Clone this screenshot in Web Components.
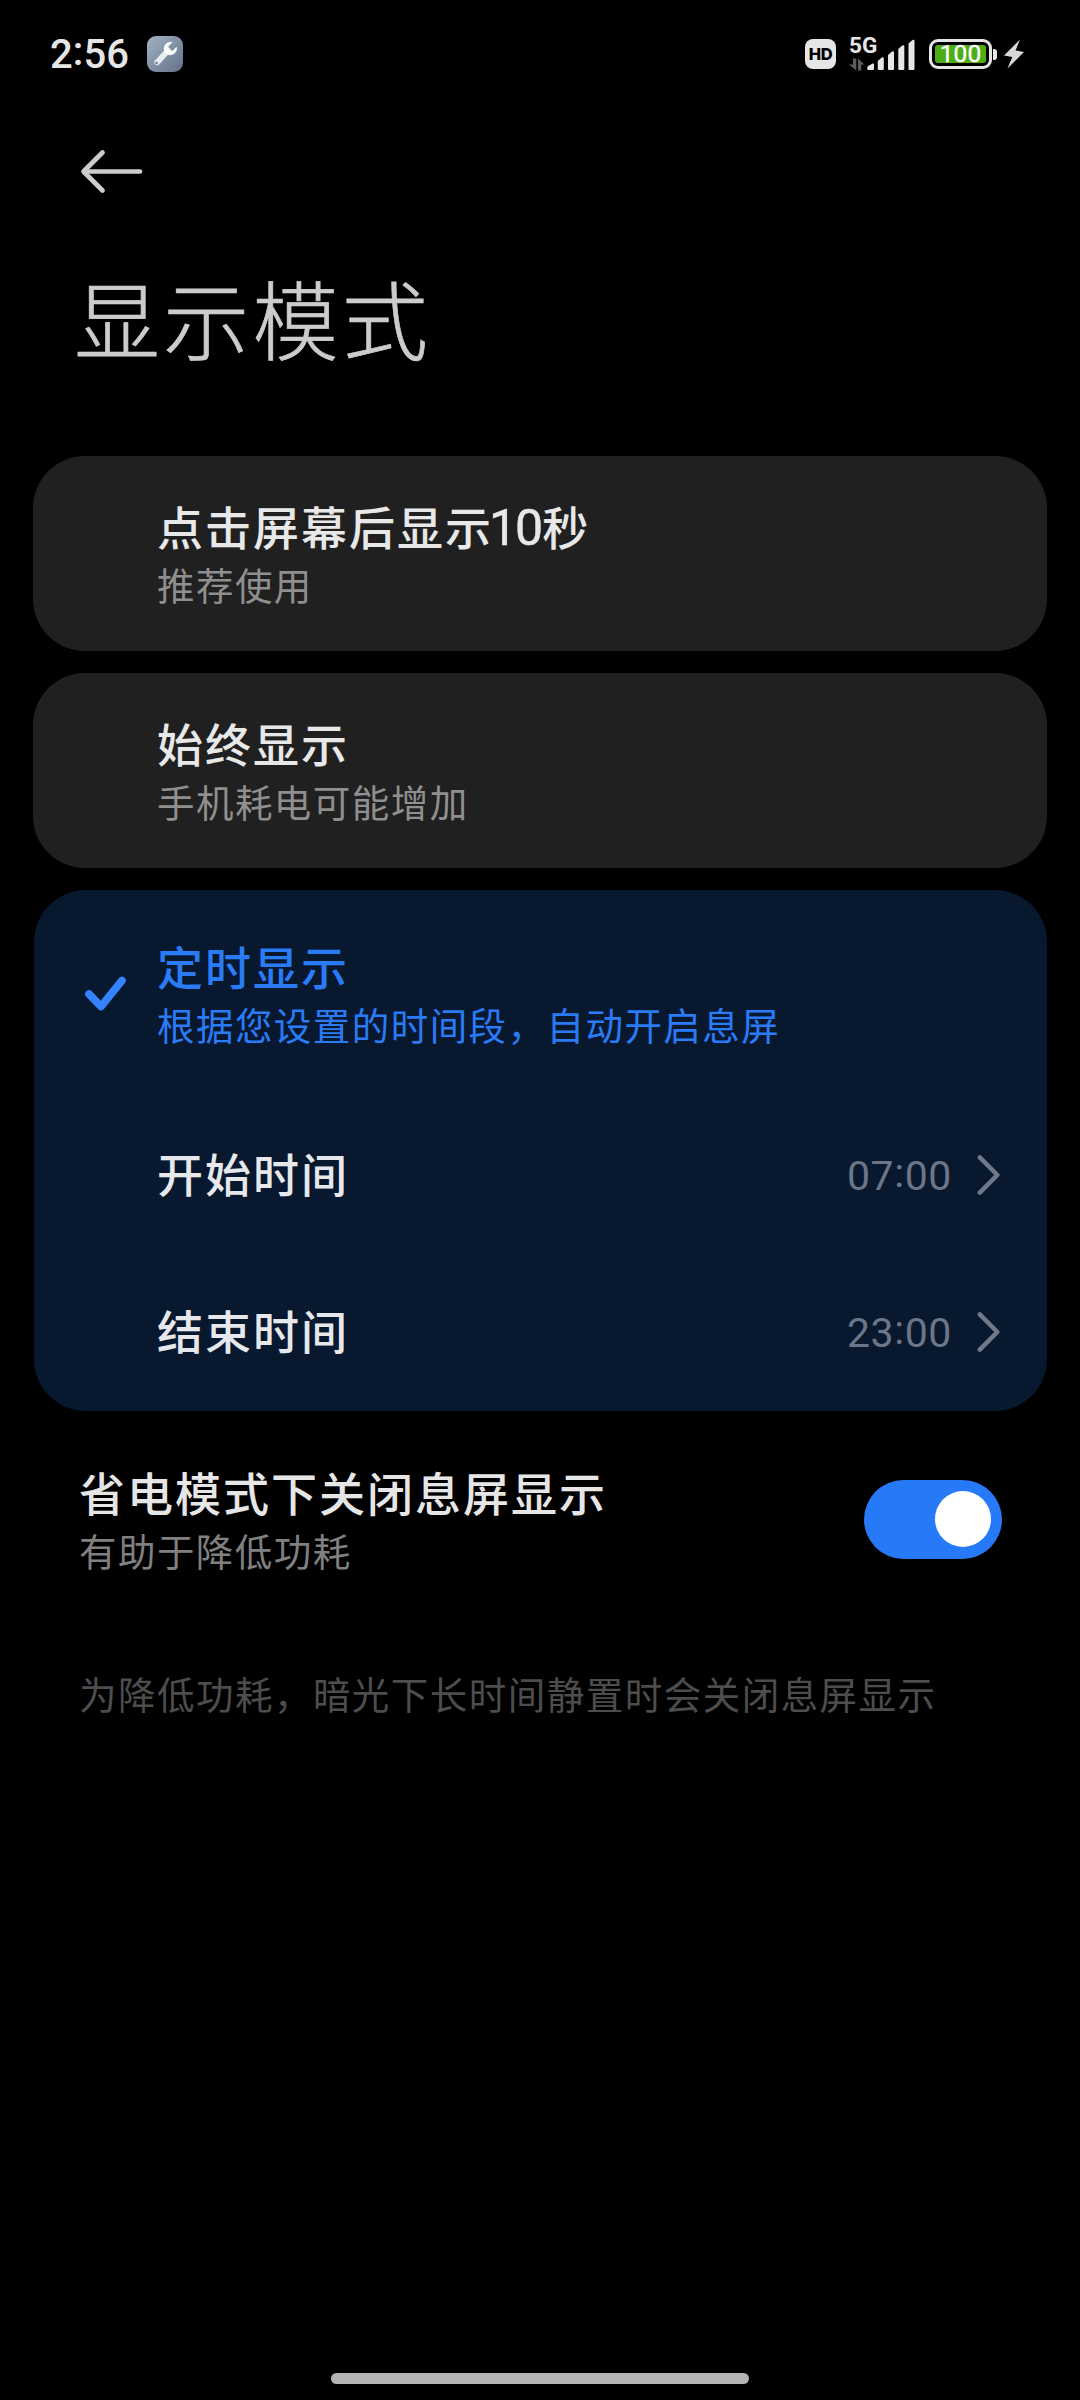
<!DOCTYPE html>
<html lang="zh-CN">
<head>
<meta charset="utf-8">
<title>显示模式</title>
<style>
html,body{margin:0;background:#000}
body{width:1080px;height:2400px;overflow:hidden;font-family:"Noto Sans CJK SC",sans-serif;color:#e6e6e6}
</style>
</head>
<body>
<display-mode-page></display-mode-page>
<script>
function define(name, html) {
  const t = document.createElement('template');
  t.innerHTML = html;
  customElements.define(name, class extends HTMLElement {
    constructor() {
      super();
      this.attachShadow({ mode: 'open' }).append(t.content.cloneNode(true));
    }
  });
}

define('status-bar', `
<style>
:host{display:flex;justify-content:space-between;height:108px;padding:0 56px 0 50px;box-sizing:border-box}
.left,.right{display:flex;align-items:center}
.time{font-family:Roboto,sans-serif;font-size:40px;font-weight:500;line-height:56px;width:97px;letter-spacing:.1px;padding-top:2px;color:#e6e6e6;white-space:nowrap}
.time i{font-style:normal;position:relative;top:-3px}
.left svg{display:block}
.hd{width:31px;height:30px;border-radius:8px;background:#e6e6e6;color:#000;font:800 16.5px/30px Inter,sans-serif;text-align:center;letter-spacing:-.3px;margin-right:13px}
.net{display:grid;width:67px;height:36px;margin-right:13px}
.net>*{grid-area:1/1}
.net span{font:700 22.500px/18px Roboto,sans-serif;color:#e6e6e6}
.bat{display:flex;align-items:center;margin-right:7px}
.shell{box-sizing:border-box;width:63px;height:30px;border:3.4px solid #e6e6e6;border-radius:9px;padding:3px;display:flex}
.fill{flex:1;background:#4cae16;border-radius:3px;color:#fff;font:400 24.500px/18px Roboto,sans-serif;-webkit-text-stroke:.3px #fff;display:flex;justify-content:center;align-items:center}
.nub{width:4px;height:11px;margin-left:1px;border-radius:0 3px 3px 0;background:#e6e6e6}
</style>
<div class="left"><span class="time">2<i>:</i>56</span>
<svg width="36" height="36" viewBox="0 0 36 36"><defs><linearGradient id="g" x1="0" y1="0" x2="1" y2="1"><stop offset="0" stop-color="#a3b3c5"/><stop offset="1" stop-color="#627186"/></linearGradient></defs>
<rect width="36" height="36" rx="9" fill="url(#g)"/>
<path d="M10 26.500 21 14.500" stroke="#e9edf1" stroke-width="5.600" stroke-linecap="round"/>
<path d="M25.500 6.300A6.600 6.600 0 1 0 29.700 10.800L25.500 14.800 21.600 13.600 21.400 10.200Z" fill="#fff"/>
<circle cx="9.500" cy="27" r="1.500" fill="#7e8da0"/></svg></div>
<div class="right"><div class="hd">HD</div>
<div class="net"><span>5G</span><svg width="67" height="36" viewBox="0 0 67 36">
<g fill="#e6e6e6"><path d="M18.300 33v-1.500q0-1.200 1-1.500l4.300-2.500q1.400-.5 1.400 1V33q0 1-1 1h-4.700q-1 0-1-1z"/><path d="M28.800 33v-8l4-3.500q2-1 2 1V33q0 1-1 1h-4q-1 0-1-1z"/><path d="M39 33V19l4-3.500q2-1 2 1V33q0 1-1 1h-4q-1 0-1-1z"/><path d="M49.300 33V13l4-3.500q2-1 2 1V33q0 1-1 1h-4q-1 0-1-1z"/><path d="M59.500 33V7.500L63.500 4q2-1 2 1V33q0 1-1 1h-4q-1 0-1-1z"/></g>
<path d="M4 22.500h3.300V34.500L0 28.500h4zM9 34.500V22.500l6.300 6h-3v6z" fill="#5c5c5c"/></svg></div>
<div class="bat"><div class="shell"><div class="fill">100</div></div><div class="nub"></div></div>
<svg width="20" height="30" viewBox="0 0 20 30"><path d="M16 .5 0 16.500 8.300 18 3.500 29.500 20 13 11.500 11.500Z" fill="#d8d8d8"/></svg></div>
`);

define('page-header', `
<style>
:host{display:flex;flex-direction:column;padding:39px 78px 0;height:348px;box-sizing:border-box}
svg{display:block;margin-left:2px}
h1{margin:57px 0 0;font-size:86px;line-height:126px;font-weight:300;letter-spacing:3.300px;margin-left:-4px;color:#ccc;-webkit-text-stroke:.7px #ccc}
</style>
<svg width="64" height="50" viewBox="0 0 64 50" fill="none" stroke="#ccc" stroke-width="4.700" stroke-linecap="round"><path d="M60 24.500H5"/><path d="M22.500 5.500 3.500 24.500 22.500 43.500" stroke-linejoin="round"/></svg>
<h1><slot></slot></h1>
`);

define('text-pair', `
<style>
:host{display:flex;flex-direction:column;white-space:nowrap;color:var(--title,#e8e8e8)}
.t{font-size:46px;line-height:64px;height:63px;padding-top:1px;font-weight:500;letter-spacing:2px}
.s{font-size:37.500px;line-height:55px;letter-spacing:1.450px;color:var(--sub,#8f8f8f)}
::slotted(b){font:400 50px/50px Roboto,sans-serif!important;letter-spacing:-2px!important;margin:0 1px 0 -4px;-webkit-text-stroke:.5px}
</style>
<div class="t"><slot></slot></div><div class="s"><slot name="sub"></slot></div>
`);

define('option-card', `
<style>
:host{display:block;box-sizing:border-box;height:195px;margin:0 33px 22px;padding:36px 0 0 124px;border-radius:52px;background:#202020}
</style><slot></slot>
`);

define('schedule-card', `
<style>
:host{display:block;height:521px;margin:0 33px 0 34px;border-radius:52px;background:#07182f}
.head{display:flex;height:207px;box-sizing:border-box;padding:42px 0 0 50px;align-items:flex-start;--title:#2a7bf6;--sub:#2a7bf6}
svg{display:block;margin:43px 31px 0 0}
</style>
<div class="head"><svg width="42" height="38" viewBox="0 0 42 38" fill="none" stroke="#3482ff" stroke-width="7.600" stroke-linecap="round" stroke-linejoin="round"><path d="M5 19 17 31.500 38 5.500"/></svg><slot name="head"></slot></div>
<slot></slot>
`);

define('time-row', `
<style>
:host{display:flex;align-items:center;height:157px;padding:0 47px 0 123px}
.l{flex:1;font-size:46px;line-height:64px;margin-top:-7px;font-weight:500;letter-spacing:2px;color:#e6e8eb}
.v{font-family:Roboto,sans-serif;font-size:41px;line-height:60px;color:#6c7686;letter-spacing:.6px}
svg{display:block;margin:-1px 0 0 25px}
</style>
<div class="l"><slot></slot></div><div class="v"><slot name="value"></slot></div>
<svg width="23" height="42" viewBox="0 0 23 42" fill="none" stroke="#6f7989" stroke-width="4.500" stroke-linecap="round" stroke-linejoin="round"><path d="M2.800 3.300 20.300 21 2.800 38.700"/></svg>
`);

define('toggle-switch', `
<style>
:host{display:flex;justify-content:flex-end;align-items:center;box-sizing:border-box;width:138px;height:79px;padding:0 11px 1px 0;border-radius:40px;background:#277af7}
i{width:56px;height:56px;border-radius:50%;background:#fff}
</style><i></i>
`);

define('setting-row', `
<style>
:host{display:flex;justify-content:space-between;align-items:flex-start;margin:47px 78px 0 79px;--sub:#808080;--title:#e6e6e6}
toggle-switch{margin-top:22px}
</style><slot></slot><toggle-switch></toggle-switch>
`);

define('foot-note', `
<style>
:host{display:block;margin:88px 0 0 79px;font-size:37.500px;line-height:55px;letter-spacing:1.480px;color:#4d4d4d;white-space:nowrap}
</style><slot></slot>
`);

define('home-indicator', `
<style>
:host{display:block;width:418px;height:11px;border-radius:6px;background:#b3b3b3;margin:auto auto 16px}
</style>
`);

define('display-mode-page', `
<style>
:host{display:flex;flex-direction:column;width:1080px;height:2400px;background:#000}
i{font-style:normal;position:relative;top:-3px}
</style>
<status-bar></status-bar>
<page-header>显示模式</page-header>
<option-card><text-pair>点击屏幕后显示<b>10</b>秒<span slot="sub">推荐使用</span></text-pair></option-card>
<option-card><text-pair>始终显示<span slot="sub">手机耗电可能增加</span></text-pair></option-card>
<schedule-card>
<text-pair slot="head">定时显示<span slot="sub">根据您设置的时间段，自动开启息屏</span></text-pair>
<time-row>开始时间<span slot="value">07<i>:</i>00</span></time-row>
<time-row>结束时间<span slot="value">23<i>:</i>00</span></time-row>
</schedule-card>
<setting-row><text-pair>省电模式下关闭息屏显示<span slot="sub">有助于降低功耗</span></text-pair></setting-row>
<foot-note>为降低功耗，暗光下长时间静置时会关闭息屏显示</foot-note>
<home-indicator></home-indicator>
`);
</script>
</body>
</html>
